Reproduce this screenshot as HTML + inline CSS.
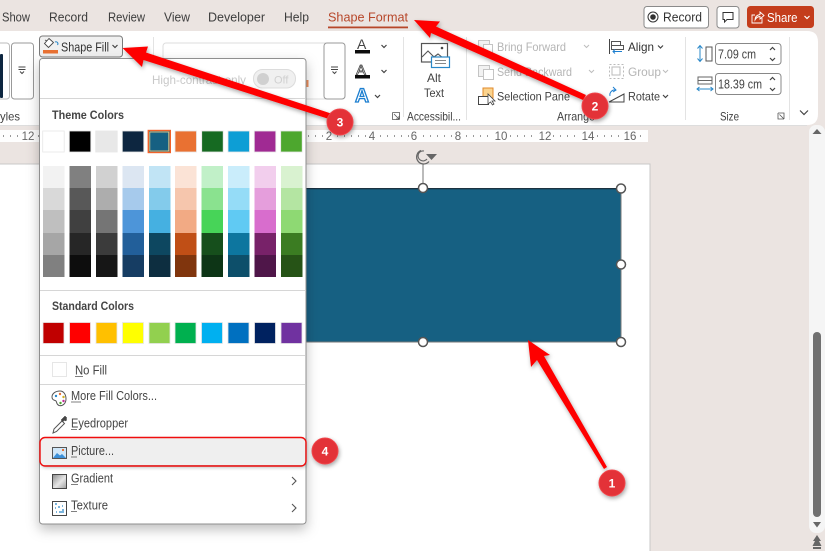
<!DOCTYPE html>
<html><head><meta charset="utf-8"><style>
html,body{margin:0;padding:0;width:825px;height:551px;overflow:hidden;background:#ebe4e1}
svg{display:block;font-family:"Liberation Sans",sans-serif;font-size:11.5px;fill:#424242}
.c{fill:none;stroke:#444;stroke-width:1.2}
.g{fill:none;stroke:#bdbdbd;stroke-width:1}
.sw rect{stroke:#e6e6e6;stroke-width:.8}
.n{fill:#fff;font-size:12px;font-weight:bold;text-anchor:middle}
.r{font-size:11.5px;fill:#666;text-anchor:middle}
</style></head><body>
<svg width="825" height="551" viewBox="0 0 825 551" xmlns="http://www.w3.org/2000/svg">
<defs>
<filter id="s" x="-20%" y="-20%" width="140%" height="140%"><feDropShadow dx="1" dy="2" stdDeviation="2" flood-color="#000" flood-opacity=".35"/></filter>
<filter id="m" x="-10%" y="-10%" width="120%" height="120%"><feDropShadow dx="0" dy="5" stdDeviation="6" flood-color="#000" flood-opacity=".25"/></filter>
<filter id="b" x="-5%" y="-5%" width="110%" height="110%"><feGaussianBlur stdDeviation=".3"/></filter>
<linearGradient id="gr" x1="0" y1="0" x2="1" y2="1"><stop offset="0" stop-color="#8a8a8a"/><stop offset=".55" stop-color="#e6e6e6"/><stop offset="1" stop-color="#a0a0a0"/></linearGradient>
</defs>
<g filter="url(#b)">
<rect width="825" height="551" fill="#ebe4e1"/>
<!-- tabs -->
<g font-size="13" fill="#3c3c3c">
<text x="2" y="21.500" textLength="28" lengthAdjust="spacingAndGlyphs">Show</text>
<text x="49" y="21.500" textLength="39" lengthAdjust="spacingAndGlyphs">Record</text>
<text x="108" y="21.500" textLength="37" lengthAdjust="spacingAndGlyphs">Review</text>
<text x="164" y="21.500" textLength="26" lengthAdjust="spacingAndGlyphs">View</text>
<text x="208" y="21.500" textLength="57" lengthAdjust="spacingAndGlyphs">Developer</text>
<text x="284" y="21.500" textLength="25" lengthAdjust="spacingAndGlyphs">Help</text>
<text x="328" y="21.500" textLength="80" lengthAdjust="spacingAndGlyphs" fill="#b7472a">Shape Format</text>
</g>
<rect x="328" y="26.500" width="80" height="1.800" fill="#b7472a"/>
<!-- top right buttons -->
<rect x="644" y="6.500" width="64.500" height="21.500" rx="3" fill="#fff" stroke="#8a8a8a"/>
<circle cx="653" cy="17" r="5" fill="none" stroke="#333"/><circle cx="653" cy="17" r="2.800" fill="#333"/>
<text x="663" y="21.500" font-size="13" textLength="39" lengthAdjust="spacingAndGlyphs" fill="#333">Record</text>
<rect x="717" y="6.500" width="22" height="21.500" rx="3" fill="#fff" stroke="#8a8a8a"/>
<path d="M723 12.500h10v7h-6l-2.500 2.500v-2.500h-1.500z" fill="none" stroke="#333"/>
<rect x="747" y="6" width="67" height="22" rx="3.500" fill="#c43e1c"/>
<path d="M755 15h-3v8h10v-5M755 20c0-3.500 2-5 5-5.500v-2.500l4 3.500-4 3.500v-2.500c-2 0-3.500.8-5 3.500z" fill="none" stroke="#fff" stroke-width=".9"/>
<text x="767" y="22" font-size="13" fill="#fff" textLength="30.500" lengthAdjust="spacingAndGlyphs">Share</text>
<path d="M804.500 16l2.500 2.500 2.500-2.500" fill="none" stroke="#fff" stroke-width="1.200"/>
<!-- scrollbar -->
<rect x="809" y="125" width="16" height="408" rx="7" fill="#f5f5f5"/>
<!-- ruler -->
<rect x="0" y="130" width="648" height="12" fill="#fff" opacity=".95"/>
<path d="M817 129l4.500 5h-9z" fill="#666"/>
<!-- slide -->
<rect x="-2" y="164" width="652" height="400" fill="#fff" stroke="#c8c8c8"/>
<rect x="813" y="332" width="8" height="185" rx="4" fill="#707070"/>
<path d="M813 522h8l-4 5.500z" fill="#666"/>
<path d="M817 535l4 6h-2l2.500 5h-9l2.500-5h-2z" fill="#666"/><rect x="813" y="547" width="8" height="2" fill="#666"/>
<!-- ruler numbers -->
<text class="r" x="28" y="140">12</text><text class="r" x="329" y="140">2</text><text class="r" x="372" y="140">4</text><text class="r" x="414" y="140">6</text><text class="r" x="458" y="140">8</text><text class="r" x="501" y="140">10</text><text class="r" x="545" y="140">12</text><text class="r" x="588" y="140">14</text><text class="r" x="630" y="140">16</text>
<path d="M3 136h18M38 136h2M308 136h16M337 136h30M380 136h30M423 136h30M466 136h27M510 136h27M553 136h27M597 136h26M640 136h6" stroke="#999" stroke-width="2" stroke-dasharray="1 6"/>
<!-- shape -->
<rect x="300" y="189" width="321" height="153" fill="#156082"/>
<rect x="300" y="188" width="321" height="1.300" fill="#1a3040"/>
<rect x="300" y="341.500" width="321" height="1" fill="#777"/>
<rect x="620.500" y="189" width="1" height="153" fill="#777"/>
<path d="M423 164v24" stroke="#777"/>
<path d="M421 150.500a7 7 0 1 0 8 11" fill="none" stroke="#666" stroke-width="1.300"/>
<path d="M424 151a5 5 0 1 0 3 8" fill="none" stroke="#666" stroke-width="1.100"/>
<path d="M426 154h11l-5.500 6z" fill="#666"/>
<g fill="#fff" stroke="#555" stroke-width="1.500">
<circle cx="423" cy="188" r="4.500"/><circle cx="621" cy="188.500" r="4.500"/><circle cx="621" cy="264.500" r="4.500"/><circle cx="423" cy="342" r="4.500"/><circle cx="621" cy="342" r="4.500"/>
</g>
<!-- ribbon -->
<path d="M-2 31H807q11 0 11 11V114q0 11-11 11H-2z" fill="#fff"/>
<path d="M-2 125.500H807" stroke="#ddd"/>
<!-- left gallery -->
<rect x="-4" y="43" width="13.500" height="56" rx="3" fill="none" stroke="#bbb"/>
<rect x="0" y="54" width="3" height="44" rx="1" fill="#0e2841"/>
<rect x="11.500" y="43" width="22" height="56" rx="3" fill="#fff" stroke="#999"/>
<path d="M18.500 67h7M18.500 69.500h7M20 71.500l2 2 2-2" fill="none" stroke="#444"/>
<text x="0" y="120.500" font-size="12" textLength="20" lengthAdjust="spacingAndGlyphs">yles</text>
<path d="M153.500 37v80" stroke="#e3e3e3"/>
<!-- wordart gallery -->
<rect x="163" y="43" width="182" height="56" rx="3" fill="#fff" stroke="#ddd"/>
<rect x="324" y="43" width="21" height="56" rx="3" fill="#fff" stroke="#999"/>
<path d="M331 67h7M331 69.500h7M332.500 71.500l2 2 2-2" fill="none" stroke="#444"/>
<!-- Text A icons -->
<text x="357" y="49" font-size="14" fill="#444">A</text><rect x="355" y="50" width="15" height="3.500" fill="#111"/>
<text x="356" y="75" font-size="15" fill="#fff" stroke="#444" stroke-width=".8">A</text><rect x="355" y="75" width="15" height="3.500" fill="#111"/>
<text x="355" y="102" font-size="19" font-weight="bold" fill="#fff" stroke="#1e7fd0" stroke-width="1.300" textLength="14" lengthAdjust="spacingAndGlyphs">A</text>
<path d="M381.500 45l2.500 2.500 2.500-2.500M381.500 70l2.500 2.500 2.500-2.500M375 95l2.500 2.500 2.500-2.500" class="c"/>
<path d="M392.500 112.500h7v7M392.500 112.500v7h7M394 114l5 5M399 116v3h-3" fill="none" stroke="#555" stroke-width=".8"/>
<path d="M403.500 37v80" stroke="#e3e3e3"/>
<!-- Alt text -->
<rect x="421.500" y="43.500" width="26" height="18.500" fill="#fff" stroke="#555" stroke-width="1.200"/>
<path d="M422 57l6-6 6 6 4-3 5 4" fill="none" stroke="#555" stroke-width="1.100"/><circle cx="442" cy="48" r="1.300" fill="#444"/>
<rect x="431.500" y="57" width="18" height="10.500" fill="#fff" stroke="#2b88c8" stroke-width="1.200"/><path d="M435 60.500h11M435 63.500h11" stroke="#888"/>
<text x="427" y="82" font-size="12" textLength="14" lengthAdjust="spacingAndGlyphs">Alt</text>
<text x="424" y="97" font-size="12" textLength="20" lengthAdjust="spacingAndGlyphs">Text</text>
<text x="407" y="120.500" font-size="12" textLength="54" lengthAdjust="spacingAndGlyphs">Accessibil...</text>
<path d="M466.500 37v83" stroke="#e3e3e3"/>
<!-- Arrange -->
<g fill="#f2f2f2" stroke="#c4c4c4"><rect x="478.500" y="40.500" width="11" height="11"/><rect x="483.500" y="44.500" width="9" height="9" fill="#fff"/>
<rect x="478.500" y="65.500" width="11" height="11"/><rect x="483.500" y="69.500" width="10" height="10" fill="#fff"/></g>
<text x="497" y="51" font-size="12" fill="#b5b5b5" textLength="69" lengthAdjust="spacingAndGlyphs">Bring Forward</text>
<text x="497" y="76" font-size="12" fill="#b5b5b5" textLength="75" lengthAdjust="spacingAndGlyphs">Send Backward</text>
<path d="M584 45l2.500 2.500 2.500-2.500M589 70l2.500 2.500 2.500-2.500" class="g"/>
<rect x="483" y="88" width="10" height="10" fill="#fbd38d" stroke="#e08a2b"/>
<rect x="478.500" y="96.500" width="10" height="8" fill="#fff" stroke="#444"/>
<path d="M488 94l0 10 2.500-2 2 3 1.500-1-2-3h3z" fill="#fff" stroke="#444" stroke-width=".8"/>
<text x="497" y="100.500" font-size="12" textLength="73" lengthAdjust="spacingAndGlyphs">Selection Pane</text>
<text x="557" y="120.500" font-size="12" textLength="38" lengthAdjust="spacingAndGlyphs">Arrange</text>
<path d="M609.500 39v15" stroke="#444"/><rect x="611.500" y="41.500" width="9" height="4" fill="#fff" stroke="#555"/><rect x="611.500" y="45.500" width="12" height="4" fill="#fff" stroke="#555"/>
<path d="M622 51.500h-9M615 49.500l-2 2 2 2" fill="none" stroke="#1e7fd0"/>
<text x="628" y="51" font-size="12" textLength="26" lengthAdjust="spacingAndGlyphs" fill="#333">Align</text>
<path d="M658 45.500l2.500 2.500 2.500-2.500" class="c"/>
<rect x="612" y="67" width="8" height="8" fill="none" stroke="#bbb"/><rect x="609.500" y="64.500" width="14" height="14" fill="none" stroke="#bbb" stroke-dasharray="2 2"/>
<text x="628" y="76" font-size="12" fill="#b5b5b5" textLength="33" lengthAdjust="spacingAndGlyphs">Group</text>
<path d="M663 70l2.500 2.500 2.500-2.500" class="g"/>
<path d="M609 102l15-8v8z" fill="none" stroke="#444"/><path d="M610 96a5 5 0 0 1 6-6M613 87l3 3-3 2" fill="none" stroke="#1e7fd0"/>
<text x="628" y="100.500" font-size="12" textLength="32" lengthAdjust="spacingAndGlyphs">Rotate</text>
<path d="M663 95l2.500 2.500 2.500-2.500" class="c"/>
<path d="M685.500 37v83" stroke="#e3e3e3"/>
<!-- Size -->
<path d="M700 46v15M697.500 48.500l2.500-3 2.500 3M697.500 58.500l2.500 3 2.500-3" fill="none" stroke="#2b88c8"/>
<rect x="706" y="47" width="6" height="14" fill="none" stroke="#555"/>
<path d="M698 77h14v7h-14zM698 80.500h14" fill="none" stroke="#666"/>
<path d="M697 89h16M699.500 87l-2.500 2 2.500 2M710.500 87l2.500 2-2.500 2" fill="none" stroke="#2b88c8"/>
<rect x="715.500" y="43.500" width="65.500" height="21" rx="3" fill="#fff" stroke="#888"/>
<rect x="715.500" y="73.500" width="65.500" height="21" rx="3" fill="#fff" stroke="#888"/>
<text x="718" y="58.500" font-size="12.500" textLength="38" lengthAdjust="spacingAndGlyphs">7.09 cm</text>
<text x="718" y="88.500" font-size="12.500" textLength="44" lengthAdjust="spacingAndGlyphs">18.39 cm</text>
<path d="M770 50l2.500-2.500 2.500 2.500M770 58l2.500 2.500 2.500-2.500M770 80l2.500-2.500 2.500 2.500M770 88l2.500 2.500 2.500-2.500" class="c"/>
<text x="720" y="120.500" font-size="12" textLength="19" lengthAdjust="spacingAndGlyphs">Size</text>
<path d="M778 113h6v6M778 113v6h6M779.500 114.500l4 4" fill="none" stroke="#555" stroke-width=".8"/>
<path d="M789.500 37v83" stroke="#e3e3e3"/>
<path d="M800 110.500l4 4 4-4" fill="none" stroke="#444" stroke-width="1.200"/>
<!-- Shape Fill button -->
<rect x="39.500" y="36" width="83" height="21" rx="3" fill="#f0f0f0" stroke="#7a7a7a"/>
<rect x="43" y="50" width="15" height="3.500" fill="#e97132"/>
<path d="M49 38.500l-4.500 5 4 4 5-5zM47 41l-2-1" fill="#fff" stroke="#444" stroke-width=".9"/><path d="M55 42a2 2 0 0 1 2.500 3" fill="none" stroke="#2b88c8"/>
<text x="61" y="51.500" font-size="12.500" fill="#333" textLength="48" lengthAdjust="spacingAndGlyphs">Shape Fill</text>
<path d="M112.500 45l2.500 2.500 2.500-2.500" class="c"/>
<!-- small orange peek -->
<rect x="306" y="80" width="2.500" height="7" fill="#e97132" opacity=".8"/>
<!-- menu -->
<rect x="39.500" y="58.500" width="266.500" height="465.500" rx="3" fill="#fff" stroke="#8f8f8f" filter="url(#m)"/>
<text x="152" y="84" fill="#c8c8c8" textLength="94" lengthAdjust="spacingAndGlyphs" font-size="12">High-contrast only</text>
<rect x="253.500" y="69.500" width="42" height="18.500" rx="9" fill="#f0f0f0" stroke="#dcdcdc"/>
<circle cx="263" cy="79" r="6" fill="#d0d0d0"/>
<text x="274" y="83.500" fill="#d0d0d0" font-size="11">Off</text>
<path d="M40 98.500h265M40 290.500h265M40 355.500h265M40 384.500h265" stroke="#d6d6d6"/>
<g font-weight="bold" fill="#444" font-size="12">
<text x="52" y="119" textLength="72" lengthAdjust="spacingAndGlyphs">Theme Colors</text>
<text x="52" y="310" textLength="82" lengthAdjust="spacingAndGlyphs">Standard Colors</text>
</g>
<!-- theme row -->
<g class="sw">
<rect x="42.700" y="131" width="21.500" height="21" fill="#fff"/><rect x="69.300" y="131" width="21.500" height="21" fill="#000"/><rect x="95.700" y="131" width="21.500" height="21" fill="#e8e8e8"/><rect x="122.300" y="131" width="21.500" height="21" fill="#0e2841"/><rect x="175" y="131" width="21.500" height="21" fill="#e97132"/><rect x="201.700" y="131" width="21.500" height="21" fill="#196b24"/><rect x="228" y="131" width="21.500" height="21" fill="#0f9ed5"/><rect x="254.300" y="131" width="21.500" height="21" fill="#a02b93"/><rect x="280.700" y="131" width="21.500" height="21" fill="#4ea72e"/>
</g>
<rect x="148.300" y="130.500" width="22" height="22" fill="#156082" stroke="#f0622a" stroke-width="1.400"/>
<rect x="149.800" y="132" width="19" height="19" fill="none" stroke="#f8d88a" stroke-width=".8"/>
<!-- tints -->
<g shape-rendering="crispEdges">
<rect x="43" y="166" width="21.500" height="22.500" fill="#f2f2f2"/><rect x="43" y="188" width="21.500" height="22.500" fill="#d9d9d9"/><rect x="43" y="210" width="21.500" height="23" fill="#bfbfbf"/><rect x="43" y="233" width="21.500" height="22.500" fill="#a6a6a6"/><rect x="43" y="255" width="21.500" height="22" fill="#808080"/>
<rect x="69.500" y="166" width="21.500" height="22.500" fill="#808080"/><rect x="69.500" y="188" width="21.500" height="22.500" fill="#595959"/><rect x="69.500" y="210" width="21.500" height="23" fill="#404040"/><rect x="69.500" y="233" width="21.500" height="22.500" fill="#262626"/><rect x="69.500" y="255" width="21.500" height="22" fill="#0d0d0d"/>
<rect x="96" y="166" width="21.500" height="22.500" fill="#d1d1d1"/><rect x="96" y="188" width="21.500" height="22.500" fill="#adadad"/><rect x="96" y="210" width="21.500" height="23" fill="#747474"/><rect x="96" y="233" width="21.500" height="22.500" fill="#3a3a3a"/><rect x="96" y="255" width="21.500" height="22" fill="#171717"/>
<rect x="122.500" y="166" width="21.500" height="22.500" fill="#dce6f2"/><rect x="122.500" y="188" width="21.500" height="22.500" fill="#a6caec"/><rect x="122.500" y="210" width="21.500" height="23" fill="#4e95d9"/><rect x="122.500" y="233" width="21.500" height="22.500" fill="#215f9a"/><rect x="122.500" y="255" width="21.500" height="22" fill="#163e64"/>
<rect x="149" y="166" width="21.500" height="22.500" fill="#c1e4f5"/><rect x="149" y="188" width="21.500" height="22.500" fill="#83cbeb"/><rect x="149" y="210" width="21.500" height="23" fill="#45b0e1"/><rect x="149" y="233" width="21.500" height="22.500" fill="#0f4761"/><rect x="149" y="255" width="21.500" height="22" fill="#0a2f41"/>
<rect x="175" y="166" width="21.500" height="22.500" fill="#fbe3d6"/><rect x="175" y="188" width="21.500" height="22.500" fill="#f6c6ad"/><rect x="175" y="210" width="21.500" height="23" fill="#f2aa84"/><rect x="175" y="233" width="21.500" height="22.500" fill="#c04f15"/><rect x="175" y="255" width="21.500" height="22" fill="#80350e"/>
<rect x="201.500" y="166" width="21.500" height="22.500" fill="#c1f0c8"/><rect x="201.500" y="188" width="21.500" height="22.500" fill="#8ae28f"/><rect x="201.500" y="210" width="21.500" height="23" fill="#47d459"/><rect x="201.500" y="233" width="21.500" height="22.500" fill="#124f1a"/><rect x="201.500" y="255" width="21.500" height="22" fill="#0c3512"/>
<rect x="228" y="166" width="21.500" height="22.500" fill="#caedfb"/><rect x="228" y="188" width="21.500" height="22.500" fill="#95dcf7"/><rect x="228" y="210" width="21.500" height="23" fill="#60caf3"/><rect x="228" y="233" width="21.500" height="22.500" fill="#0b769f"/><rect x="228" y="255" width="21.500" height="22" fill="#074f6a"/>
<rect x="254.500" y="166" width="21.500" height="22.500" fill="#f2ceed"/><rect x="254.500" y="188" width="21.500" height="22.500" fill="#e59edc"/><rect x="254.500" y="210" width="21.500" height="23" fill="#d86dcd"/><rect x="254.500" y="233" width="21.500" height="22.500" fill="#782069"/><rect x="254.500" y="255" width="21.500" height="22" fill="#501549"/>
<rect x="281" y="166" width="21.500" height="22.500" fill="#d9f2d0"/><rect x="281" y="188" width="21.500" height="22.500" fill="#b4e5a2"/><rect x="281" y="210" width="21.500" height="23" fill="#8ed973"/><rect x="281" y="233" width="21.500" height="22.500" fill="#3a7c22"/><rect x="281" y="255" width="21.500" height="22" fill="#275317"/>
</g>
<!-- standard -->
<g class="sw">
<rect x="43" y="322.500" width="21" height="21" fill="#c00000"/><rect x="69.500" y="322.500" width="21" height="21" fill="#f00"/><rect x="96" y="322.500" width="21" height="21" fill="#ffc000"/><rect x="122.500" y="322.500" width="21" height="21" fill="#ff0"/><rect x="149" y="322.500" width="21" height="21" fill="#92d050"/><rect x="175" y="322.500" width="21" height="21" fill="#00b050"/><rect x="201.500" y="322.500" width="21" height="21" fill="#00b0f0"/><rect x="228" y="322.500" width="21" height="21" fill="#0070c0"/><rect x="254.500" y="322.500" width="21" height="21" fill="#002060"/><rect x="281" y="322.500" width="21" height="21" fill="#7030a0"/>
</g>
<!-- menu items -->
<rect x="52.500" y="362.500" width="14" height="14" fill="#fff" stroke="#e6e6e6"/>
<g font-size="12.500" fill="#444">
<text x="75" y="374.500" textLength="32" lengthAdjust="spacingAndGlyphs">No Fill</text>
<text x="71" y="400" textLength="86" lengthAdjust="spacingAndGlyphs">More Fill Colors...</text>
<text x="71" y="427.500" textLength="57" lengthAdjust="spacingAndGlyphs">Eyedropper</text>
<text x="71" y="482.500" textLength="42" lengthAdjust="spacingAndGlyphs">Gradient</text>
<text x="71" y="509.500" textLength="37" lengthAdjust="spacingAndGlyphs">Texture</text>
</g>
<path d="M75 376.500h8M71 402h10M71 429.500h6M71 484.500h7M71 511.500h6" stroke="#555" stroke-width=".8"/>
<!-- palette icon -->
<path d="M60 391c-4.500 0-8 2.500-8 6s3 3 4 4 0 3 3 4.500c4 1 7-2.500 7-6.500s-2-8-6-8z" fill="#fff" stroke="#555"/>
<circle cx="56" cy="396" r="1.200" fill="#2b88c8"/><circle cx="60" cy="394" r="1.200" fill="#e97132"/><circle cx="63.500" cy="397" r="1.200" fill="#d0b020"/><circle cx="63.500" cy="401" r="1.200" fill="#c02b93"/><circle cx="60.500" cy="403" r="1.200" fill="#4ea72e"/>
<!-- eyedropper -->
<path d="M53 433l1-4 8-8 2.500 2.500-8 8z" fill="#fff" stroke="#555"/><path d="M61 420l4-4 2 2-1 1 1 1-2 1-1-1-1 2z" fill="#444" stroke="#444" stroke-width=".5"/>
<!-- picture highlight -->
<rect x="41" y="438" width="264" height="27" rx="3" fill="#efefef" filter="url(#s)"/>
<rect x="40" y="437.500" width="266" height="28.500" rx="5" fill="none" stroke="#f01010" stroke-width="1.400"/>
<rect x="52.500" y="447.500" width="14" height="11" fill="#cfe6f8" stroke="#555"/>
<path d="M53 458l4-5 3 2.500 2-1.500 4 4z" fill="#3a8fd8"/><rect x="62" y="449" width="2" height="2" fill="#e97132"/>
<text x="71" y="455" font-size="12.500" fill="#444" textLength="43" lengthAdjust="spacingAndGlyphs">Picture...</text>
<path d="M71 457h6" stroke="#555" stroke-width=".8"/>
<!-- gradient/texture icons -->
<rect x="52.500" y="474.500" width="14" height="14" fill="url(#gr)" stroke="#444"/>
<rect x="52.500" y="501.500" width="14" height="14" fill="#fff" stroke="#444"/>
<path d="M55 504h2M58 507h2M55 508h1M62 510h2M59 512h5M62 506h1M56 512h1" stroke="#2b88c8" stroke-width="1.300"/>
<path d="M292 477l4 4-4 4M292 504l4 4-4 4" fill="none" stroke="#555" stroke-width="1.100"/>
<!-- arrows -->
<g fill="#fe0000" filter="url(#s)">
<path d="M122.500 48L148 46.500 146 52.500 331 113.500 329 119 143.500 60 142 67z"/>
<path d="M414 20L440 21.500 436 26.500 586 95 583 100 431 33 430 38z"/>
<path d="M528 340L550 355 544 356 607 467 604 469 537 360 531 367z"/>
</g>
<!-- number badges -->
<g filter="url(#s)" fill="#e33038" stroke="#f0444a" stroke-width="1">
<circle cx="340" cy="122" r="13"/><circle cx="595" cy="106" r="13"/><circle cx="612" cy="483" r="13"/><circle cx="325" cy="451" r="13"/>
</g>
<text class="n" x="340" y="126.500">3</text><text class="n" x="595" y="110.500">2</text><text class="n" x="612" y="487.500">1</text><text class="n" x="325" y="455.500">4</text>
</g>
</svg>
</body></html>
